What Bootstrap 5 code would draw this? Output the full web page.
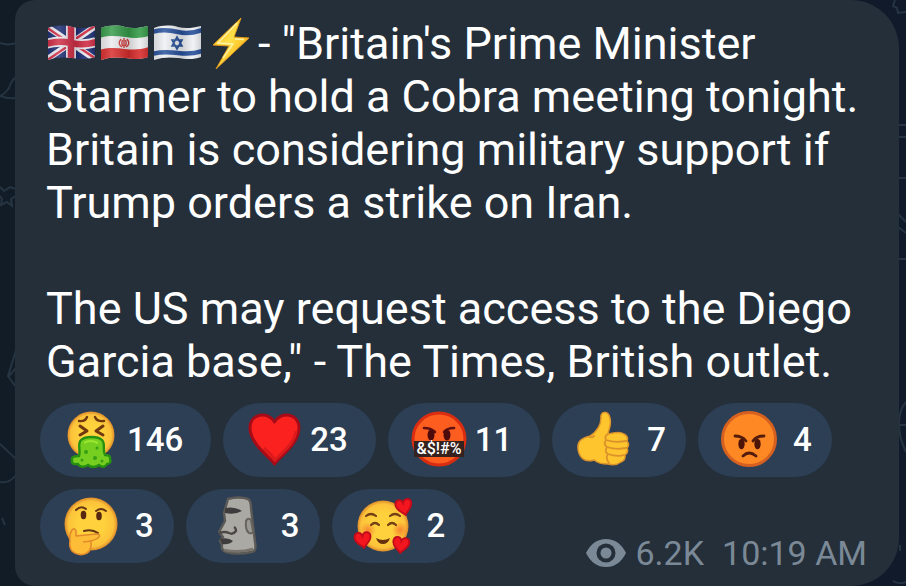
<!DOCTYPE html>
<html lang="en">
<head>
<meta charset="utf-8">
<meta name="viewport" content="width=device-width, initial-scale=1">
<title>Channel message</title>
<link href="https://cdn.jsdelivr.net/npm/bootstrap@5.3.0/dist/css/bootstrap.min.css" rel="stylesheet">
<style>
  body { font-family: Roboto, "Liberation Sans", sans-serif; background: linear-gradient(90deg, #111c26, #111a2a); }
  .doodles { position: absolute; top: 0; width: 16px; height: 586px; z-index: -1; fill: none; stroke: #263442; stroke-width: 2; }
  .doodles-left { left: 0; }
  .doodles-right { right: 0; }
  .bubble { margin: 0 7px 0 15px; padding: 17px 32px 13px 25px; background: #242f3a; color: #fff; border-radius: 20px 48px 48px 20px; }
  .message { margin: 0 0 53px 6px; font-size: 45px; line-height: 53px; }
  .message:last-of-type { margin-bottom: 15px; }
  .glyph { width: 53px; height: 53px; vertical-align: top; overflow: visible; }
  .reactions { gap: 12px; }
  .reaction { height: 74px; padding: 0 28px 0 22px; gap: 5px; border: 0; background: #2d3f54; color: #fff; font-size: 33px; line-height: 40px; font-weight: 500; }
  .reaction:hover { background: #36506b; }
  .reaction-single { padding-right: 20px; gap: 13px; }
  .reaction svg { width: 60px; height: 60px; overflow: visible; }
  .meta { margin-top: 44px; font-size: 34px; line-height: 40px; color: #7b8997; }
  .meta svg { width: 40px; height: 30px; }
  .views { gap: 10px; margin-right: 18px; }
</style>
<script src="https://cdn.jsdelivr.net/npm/bootstrap@5.3.0/dist/js/bootstrap.bundle.min.js"></script>
</head>
<body class="min-vh-100 position-relative">
<svg class="doodles doodles-left" viewBox="0 0 16 586" aria-hidden="true">
  <path d="M0 43Q8 46 16 43M16 77Q11 81 9 88Q5 94 0 96Q8 99 16 98M0 187L4 191L10 187L16 189M0 196L2 199L1 205L7 202L12 206L11 199L16 196M16 350L8 376L16 387M9 376L16 368M0 444L16 459M0 482Q9 484 16 475M2 518L5 525"/>
</svg>
<svg class="doodles doodles-right" viewBox="0 0 16 586" aria-hidden="true">
  <path d="M5 0L3 6L7 8L8 13L16 12M8 125H16M8 137H16M9 178H16M8 214L16 222M8 227L16 233M9 259H16M16 402Q9 410 9 424T16 452M9 425H16M10 545V551M3 581Q9 585 16 582"/>
</svg>

<article class="bubble">
  <p class="message"><svg class="glyph" viewBox="0 0 53 53" role="img" aria-label="Flag of the United Kingdom">
      <defs>
        <clipPath id="wave"><path d="M2 11C10 8 19 8 26 10S41 11 49 9V40C41 43 33 42 26 41S10 40 2 43Z"/></clipPath>
        <linearGradient id="fold"><stop stop-color="#000" stop-opacity=".12"/><stop offset=".25" stop-color="#fff" stop-opacity=".16"/><stop offset=".6" stop-color="#000" stop-opacity=".14"/><stop offset=".82" stop-color="#fff" stop-opacity=".1"/><stop offset="1" stop-color="#000" stop-opacity=".16"/></linearGradient>
      </defs>
      <g clip-path="url(#wave)">
        <path fill="#1b2c72" d="M0 6H50V46H0Z"/>
        <path stroke="#e8e8ee" stroke-width="6" d="M0 9L50 43M0 43L50 9"/>
        <path stroke="#d02d45" stroke-width="2.400" d="M0 10L25 27M50 42L25 25M0 44L25 27M50 8L25 25"/>
        <path stroke="#e8e8ee" stroke-width="10" fill="none" d="M25 6V46M0 27Q12 23 25 26T50 25"/>
        <path stroke="#d02d45" stroke-width="6.500" fill="none" d="M25 6V46M0 27Q12 23 25 26T50 25"/>
        <path fill="url(#fold)" d="M0 6H50V46H0Z"/>
      </g>
    </svg><svg class="glyph" viewBox="0 0 53 53" role="img" aria-label="Flag of Iran">
      <g clip-path="url(#wave)">
        <path fill="#ececee" d="M0 6H50V46H0Z"/>
        <path fill="#369b49" d="M0 6H50V19C40 22 34 21 26 20S10 18 0 21Z"/>
        <path fill="#d92d2d" d="M0 33C10 30 18 31 26 32S42 33 50 30V46H0Z"/>
        <path fill="none" stroke="#d33b3b" stroke-width="1.400" d="M25 21V31M22 22Q18 27 23 30M28 22Q32 27 27 30M23.500 23Q22 27 24 29M26.500 23Q28 27 26 29"/>
        <path fill="url(#fold)" d="M0 6H50V46H0Z"/>
      </g>
    </svg><svg class="glyph" viewBox="0 0 53 53" role="img" aria-label="Flag of Israel">
      <g clip-path="url(#wave)">
        <path fill="#eef0f3" d="M0 6H50V46H0Z"/>
        <path fill="none" stroke="#27509b" stroke-width="4.500" d="M0 15C10 12 18 13 26 15S42 16 50 13M0 37C10 34 18 35 26 36S42 37 50 34"/>
        <path fill="none" stroke="#27509b" stroke-width="1.600" d="M25 20L30 29H20ZM25 32L20 23H30Z"/>
        <path fill="url(#fold)" d="M0 6H50V46H0Z"/>
      </g>
    </svg><svg class="glyph" viewBox="0 0 53 53" role="img" aria-label="Lightning">
      <defs><linearGradient id="bolt" x1="0" y1="0" x2="1" y2="1"><stop stop-color="#f5a51d"/><stop offset=".45" stop-color="#ffe14a"/><stop offset=".65" stop-color="#fbc52c"/><stop offset="1" stop-color="#e98b13"/></linearGradient></defs>
      <path fill="url(#bolt)" stroke="#e39a1c" stroke-linejoin="round" d="M36 1L8 28L24 29L11 52L44 21L29 20Z"/>
      <path fill="none" stroke="#fff3a0" stroke-width="1.500" d="M32 6L13 26L28 27L18 41M30 22L39 22.500"/>
    </svg>- "Britain's Prime Minister Starmer to hold a Cobra meeting tonight. Britain is considering military support if Trump orders a strike on Iran.</p>
  <p class="message">The US may request access to the Diego Garcia base," - The Times, British outlet.</p>

  <div class="reactions d-flex flex-wrap align-items-start">
    <button type="button" class="reaction d-flex align-items-center rounded-pill" aria-label="Vomiting, 146">
      <svg viewBox="0 0 60 60" aria-hidden="true">
        <defs><radialGradient id="face"><stop offset=".5" stop-color="#fed13d"/><stop offset=".86" stop-color="#fcc23a"/><stop offset="1" stop-color="#dc8b2b"/></radialGradient></defs>
        <circle cx="29" cy="25" r="23.500" fill="url(#face)"/>
        <g fill="none" stroke="#70380f" stroke-width="2.400" stroke-linecap="round" stroke-linejoin="round"><path d="M17 11Q23 12 25 7M33 7Q35 12 42 11"/><path stroke-width="3" d="M18 16L25 21L18 25M41 16L34 21L41 25"/></g>
        <path fill="#76ce20" stroke="#269111" stroke-width="2.400" d="M17 46C19 40 15 34 19 30C23 26 36 26 40 30C44 34 40 40 43 45Q49 45 48 49Q50 53 45 54Q42 59 37 55Q31 59 26 55Q19 59 16 54Q9 55 10 50Q9 46 17 46Z"/>
        <path fill="none" stroke="#9be62f" stroke-width="2" d="M22 33Q28 29 36 33"/>
        <g fill="#369f15"><circle cx="24" cy="42" r="2"/><circle cx="35" cy="38" r="1.500"/><circle cx="33" cy="48" r="2"/><circle cx="20" cy="50" r="1.500"/><circle cx="40" cy="51" r="1.500"/></g>
      </svg><span>146</span>
    </button>
    <button type="button" class="reaction d-flex align-items-center rounded-pill" aria-label="Heart, 23">
      <svg viewBox="0 0 60 60" aria-hidden="true"><path fill="#fb211f" stroke="#a80b18" stroke-width="3" stroke-linejoin="round" d="M29.500 54C26 48 5 34 5 18C5 3 23 1 29.500 12C36 1 54 3 54 18C54 34 33 48 29.500 54Z"/><path fill="none" stroke="#db1a1c" stroke-width="3" d="M51 21C50 34 35 44 30 50Q26 44 19 38"/></svg><span>23</span>
    </button>
    <button type="button" class="reaction d-flex align-items-center rounded-pill" aria-label="Swearing, 11">
      <svg viewBox="0 0 60 60" aria-hidden="true">
        <circle cx="29" cy="29" r="26" fill="#fd5e20" stroke="#d92d12" stroke-width="3"/>
        <path fill="none" stroke="#601010" stroke-width="2.600" stroke-linecap="round" d="M14 18Q21 18 25 22M44 18Q37 18 34 22"/>
        <g fill="#4c0b0b"><ellipse cx="21" cy="25" rx="3.500" ry="5.500"/><ellipse cx="37" cy="25" rx="3.500" ry="5.500"/></g>
        <path fill="#35211e" d="M4 31H54V47H4Z"/>
        <text x="29" y="44" text-anchor="middle" fill="#fff" font-size="16" font-weight="500">&amp;$!#%</text>
      </svg><span>11</span>
    </button>
    <button type="button" class="reaction reaction-single d-flex align-items-center rounded-pill" aria-label="Thumbs up, 7">
      <svg viewBox="0 0 60 60" aria-hidden="true">
        <path fill="#fec52f" stroke="#dc922b" stroke-width="1.500" stroke-linejoin="round" d="M4 39C3 31 8 28 16 26C22 22 27 16 27 8C26 1 34 0 36 8C38 15 34 21 34 24Q46 21 50 24Q55 27 53 31Q56 35 53 38Q55 42 51 45Q52 50 47 52Q42 56 34 54Q25 54 20 50C10 53 5 47 4 39Z"/>
        <path fill="none" stroke="#dc922b" stroke-width="1.800" stroke-linecap="round" d="M15 27Q18 28 20 26M34 24Q30 26 32 30Q41 33 52 31M32 30Q29 34 33 37Q42 40 52 38M33 37Q30 42 34 44Q43 47 50 45M34 44Q31 48 35 53"/>
      </svg><span>7</span>
    </button>
    <button type="button" class="reaction reaction-single d-flex align-items-center rounded-pill" aria-label="Angry, 4">
      <svg viewBox="0 0 60 60" aria-hidden="true">
        <circle cx="29" cy="29" r="26.500" fill="#fe8924" stroke="#d66020" stroke-width="3"/>
        <path fill="none" stroke="#541d0b" stroke-width="2.800" stroke-linecap="round" d="M15 26Q22 26 26 31M44 26Q36 26 33 31M23 46Q29 40 36 46"/>
        <g fill="#4d1509"><ellipse cx="21.500" cy="34" rx="3.200" ry="5.200"/><ellipse cx="37.500" cy="34" rx="3.200" ry="5.200"/></g>
      </svg><span>4</span>
    </button>
    <button type="button" class="reaction reaction-single d-flex align-items-center rounded-pill" aria-label="Thinking, 3">
      <svg viewBox="0 0 60 60" aria-hidden="true">
        <circle cx="29" cy="28" r="26.500" fill="url(#face)"/>
        <path fill="none" stroke="#643414" stroke-width="2" stroke-linecap="round" d="M14 14Q19 9 24 13M34 15Q39 11 44 15M22 35Q30 33 36 37"/>
        <g fill="#56280f"><ellipse cx="21.500" cy="19" rx="2.800" ry="4.200"/><ellipse cx="37" cy="20" rx="2.800" ry="4.200"/></g>
        <path fill="#febd37" stroke="#e38b2c" stroke-width="1.600" stroke-linejoin="round" d="M8 45Q7 39 10 34Q12 31 14 35L14 40L34 38Q39 38 37 41Q36 43 29 45Q30 54 25 57Q17 61 10 55Q7 51 8 45Z"/>
        <path fill="none" stroke="#e38b2c" stroke-width="1.600" d="M29 45L21 46"/>
      </svg><span>3</span>
    </button>
    <button type="button" class="reaction reaction-single d-flex align-items-center rounded-pill" aria-label="Moai, 3">
      <svg viewBox="0 0 60 60" aria-hidden="true">
        <path fill="#aaa9a4" stroke="#5c5a56" stroke-width="2.400" stroke-linejoin="round" d="M20 3Q31 0 40 3Q43 5 43 12L47 46Q49 56 43 56Q30 59 18 56Q13 54 14 49L12 45L15 41L11 36L17 25L16 17Z"/>
        <path fill="#3e3c3c" d="M17 12Q27 10 34 15Q27 19 17 17ZM12 43Q20 41 25 45Q21 49 14 48Z"/>
        <path fill="none" stroke="#4b4845" stroke-width="2.400" d="M11 37Q17 35 21 37T28 35Q28 32 26 31"/>
        <path fill="#9a9994" stroke="#67645f" stroke-width="2" d="M38 25Q40 21 43 24L45 35Q45 38 41 37Q37 34 38 25Z"/>
        <path fill="none" stroke="#77736c" stroke-width="2.400" d="M16 54Q31 57 45 53"/>
      </svg><span>3</span>
    </button>
    <button type="button" class="reaction reaction-single d-flex align-items-center rounded-pill" aria-label="Smiling with hearts, 2">
      <svg viewBox="0 0 60 60" aria-hidden="true">
        <defs>
          <radialGradient id="blush"><stop stop-color="#f66b2c" stop-opacity=".7"/><stop offset="1" stop-color="#f66b2c" stop-opacity="0"/></radialGradient>
          <path id="tiny-heart" d="M0 8C-2 5-9 2-8-4C-7-9-1-9 0-4C2-9 8-8 8-3C8 2 2 5 0 8Z" fill="#f3161e" stroke="#c10b1b" stroke-width="1.800"/>
        </defs>
        <circle cx="29" cy="30" r="25.500" fill="url(#face)"/>
        <circle cx="14" cy="34" r="8" fill="url(#blush)"/><circle cx="46" cy="34" r="8" fill="url(#blush)"/>
        <path fill="none" stroke="#744016" stroke-width="2.200" stroke-linecap="round" d="M12 20Q17 16 22 20M36 20Q41 16 46 20M17 29Q21 25 25 29M34 29Q38 25 42 29"/>
        <path fill="#66320e" d="M22 42Q29 46 36 42Q34 48 29 48Q24 48 22 42Z"/>
        <use href="#tiny-heart" transform="translate(50 11) rotate(-12)"/>
        <use href="#tiny-heart" transform="translate(9 44) rotate(-8)"/>
        <use href="#tiny-heart" transform="translate(47 49) rotate(6)"/>
      </svg><span>2</span>
    </button>
    <div class="meta d-flex align-items-center ms-auto">
      <span class="views d-flex align-items-center"><svg viewBox="0 0 40 30" role="img" aria-label="Views"><path fill="#7b8997" d="M0 15Q7 1 20 1T40 15Q33 29 20 29T0 15Z"/><circle cx="20" cy="15" r="9.500" fill="#242f3a"/><circle cx="20" cy="15" r="5.500" fill="#7b8997"/></svg><span>6.2K</span></span>
      <time datetime="10:19">10:19 AM</time>
    </div>
  </div>
</article>
</body>
</html>
